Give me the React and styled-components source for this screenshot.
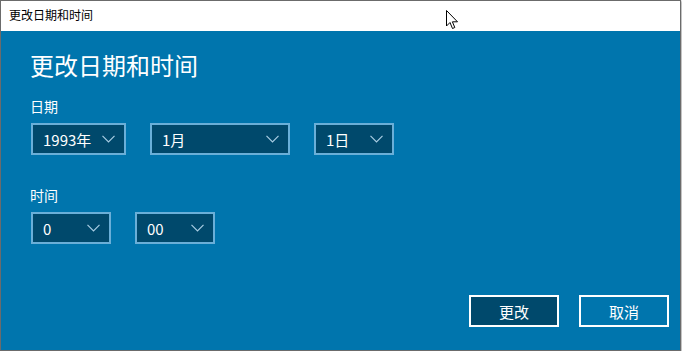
import React from "react";
import styled, { createGlobalStyle } from "styled-components";

const GlobalStyle = createGlobalStyle`
  body {
    margin: 0;
    background: #ffffff;
    font-family: "Noto Sans CJK SC", "Noto Sans", sans-serif;
  }
`;

const StyledWindow = styled.div`
  position: relative;
  width: 681px;
  height: 351px;
  box-sizing: border-box;
  border: 1px solid #6b6b6b;
  box-shadow: 1px 1px 2px rgba(0, 0, 0, 0.35);
  display: flex;
  flex-direction: column;
`;

const StyledTitleBar = styled.div`
  height: 30px;
  flex-shrink: 0;
  background: #ffffff;
  color: #000000;
  font-size: 12px;
  line-height: 28px;
  padding-left: 8px;
`;

const StyledBody = styled.div`
  flex: 1;
  background: #0075ad;
  color: #ffffff;
  padding: 18px 11px 23px 30px;
  display: flex;
  flex-direction: column;
`;

const StyledH1 = styled.h1`
  margin: 0 0 15px -1px;
  font-size: 24px;
  font-weight: 400;
  line-height: 32px;
`;

const StyledLabel = styled.div`
  font-size: 14px;
  line-height: 20px;
  margin: 0 0 7px -1px;
`;

const StyledRow = styled.div`
  display: flex;
  gap: 24px;
  margin-bottom: ${(props) => props.$spacing || 0}px;
`;

const StyledSelect = styled.div`
  width: ${(props) => props.$width}px;
  height: 32px;
  box-sizing: border-box;
  border: 2px solid #6aafd8;
  background: #00496c;
  display: flex;
  align-items: center;
  justify-content: space-between;
  padding: 0 9px 0 10px;
  font-size: 15px;
`;

const StyledFooter = styled.div`
  margin-top: auto;
  display: flex;
  justify-content: flex-end;
  gap: 20px;
`;

const StyledButton = styled.button`
  width: 90px;
  height: 32px;
  box-sizing: border-box;
  border: 2px solid #ffffff;
  background: ${(props) => (props.$primary ? "#00496c" : "transparent")};
  color: #ffffff;
  font-family: inherit;
  font-size: 15px;
  padding: 0;
`;

const StyledCursor = styled.svg`
  position: absolute;
  left: 445px;
  top: 9px;
`;

function Chevron() {
  return (
    <svg width="13" height="8" viewBox="0 0 13 8">
      <path d="M0.5 0.8 L6.5 6.8 L12.5 0.8" fill="none" stroke="#a8cde3" strokeWidth="1.2" />
    </svg>
  );
}

function Select({ width, value }) {
  return (
    <StyledSelect $width={width}>
      <span>{value}</span>
      <Chevron />
    </StyledSelect>
  );
}

function App() {
  return (
    <>
      <GlobalStyle />
      <StyledWindow>
        <StyledTitleBar>更改日期和时间</StyledTitleBar>
        <StyledBody>
          <StyledH1>更改日期和时间</StyledH1>

          <StyledLabel>日期</StyledLabel>
          <StyledRow $spacing={30}>
            <Select width={95} value="1993年" />
            <Select width={140} value="1月" />
            <Select width={80} value="1日" />
          </StyledRow>

          <StyledLabel>时间</StyledLabel>
          <StyledRow>
            <Select width={80} value="0" />
            <Select width={80} value="00" />
          </StyledRow>

          <StyledFooter>
            <StyledButton $primary>更改</StyledButton>
            <StyledButton>取消</StyledButton>
          </StyledFooter>
        </StyledBody>

        <StyledCursor width="13" height="20" viewBox="0 0 13 20">
          <path
            d="M0.5 0.5 L0.5 16 L4 12.5 L6.5 18.5 L8.8 17.5 L6.4 11.8 L11.5 11.8 Z"
            fill="#ffffff"
            stroke="#000000"
            strokeWidth="1"
            strokeLinejoin="miter"
          />
        </StyledCursor>
      </StyledWindow>
    </>
  );
}

export default App;
